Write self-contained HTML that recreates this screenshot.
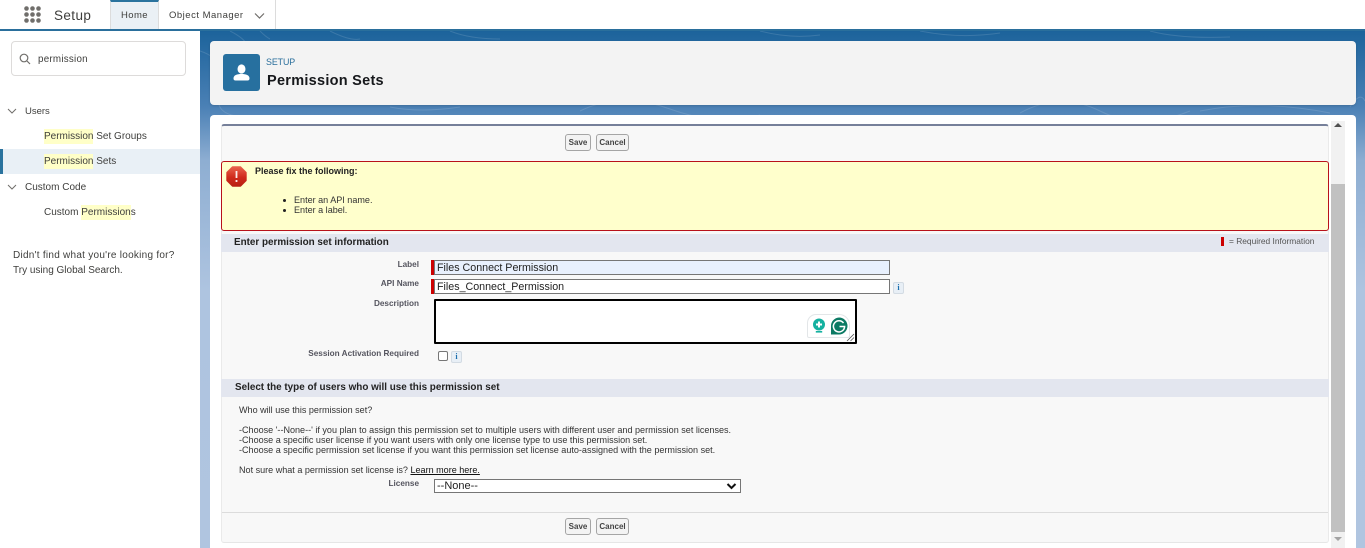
<!DOCTYPE html>
<html><head><meta charset="utf-8"><style>
html,body{margin:0;padding:0;width:1365px;height:548px;overflow:hidden;background:#fff;font-family:"Liberation Sans",sans-serif;color:#333}
.a{position:absolute;white-space:nowrap}
.nav{font-size:10px;color:#3e3e3c}
.hl{background:#ffffc8;padding:2px 0}
.btn{position:absolute;box-sizing:border-box;height:17px;border:1px solid #a5a5a5;border-radius:3px;background:#f3f3f3;font:bold 8px "Liberation Sans",sans-serif;color:#444;text-align:center;line-height:15px}
.lab{position:absolute;right:946px;font:bold 8.2px "Liberation Sans",sans-serif;color:#55555f;white-space:nowrap}
.inp{position:absolute;box-sizing:border-box;left:434px;width:456px;height:15px;border:1px solid #767676;font-size:10.7px;line-height:14px;padding-left:2px;color:#222;white-space:nowrap}
.req{position:absolute;left:431px;width:3px;height:15px;background:#c00}
.sec{position:absolute;left:221px;width:1108px;background:#e3e6ef;font:bold 9.9px "Liberation Sans",sans-serif;color:#222;height:18px;line-height:18px}
.t{position:absolute;font-size:9.05px;color:#333;white-space:nowrap;left:239px}
.i{position:absolute;box-sizing:border-box;width:11px;height:12px;border:1px solid #d3dbe3;border-radius:2px;background:#e8eff6;color:#1b6fae;font:bold 8px "Liberation Serif",serif;text-align:center;line-height:10px}
</style></head><body>

<!-- top bar -->
<div class="a" style="left:0;top:0;width:1365px;height:29px;background:#fff"></div>
<svg class="a" style="left:24px;top:6px" width="17" height="18" fill="#706e6b"><circle cx="2.5" cy="2.5" r="2.3"/><circle cx="8.5" cy="2.5" r="2.3"/><circle cx="14.5" cy="2.5" r="2.3"/><circle cx="2.5" cy="8.5" r="2.3"/><circle cx="8.5" cy="8.5" r="2.3"/><circle cx="14.5" cy="8.5" r="2.3"/><circle cx="2.5" cy="14.5" r="2.3"/><circle cx="8.5" cy="14.5" r="2.3"/><circle cx="14.5" cy="14.5" r="2.3"/></svg>
<div class="a" style="left:54px;top:8px;font-size:13.5px;letter-spacing:.4px;color:#3e3e3c">Setup</div>
<div class="a" style="left:110px;top:0;width:49px;height:29px;box-sizing:border-box;background:#eaf0f5;border-top:2px solid #2a739e;border-left:1px solid #dcdcdc;border-right:1px solid #dcdcdc"></div>
<div class="a" style="left:121px;top:10px;font-size:9.5px;letter-spacing:.4px;color:#3e3e3c">Home</div>
<div class="a" style="left:169px;top:10px;font-size:9.5px;letter-spacing:.5px;color:#3e3e3c">Object Manager</div>
<svg class="a" style="left:254px;top:12px" width="11" height="8" fill="none" stroke="#706e6b" stroke-width="1.2"><path d="M1 1.5L5.5 6L10 1.5"/></svg>
<div class="a" style="left:275px;top:0;width:1px;height:29px;background:#dcdcdc"></div>
<div class="a" style="left:0;top:29px;width:1365px;height:2px;background:#2a6f9c"></div>

<!-- sidebar -->
<div class="a" style="left:0;top:31px;width:200px;height:517px;background:#fff"></div>
<div class="a" style="left:11px;top:41px;width:175px;height:35px;box-sizing:border-box;border:1px solid #dddbda;border-radius:4px;background:#fff"></div>
<svg class="a" style="left:19px;top:53px" width="12" height="12" fill="none" stroke="#706e6b" stroke-width="1.2"><circle cx="5" cy="5" r="3.8"/><path d="M8 8L11 11"/></svg>
<div class="a nav" style="left:38px;top:54px;font-size:9.8px;letter-spacing:.25px">permission</div>
<svg class="a" style="left:7px;top:108px" width="10" height="7" fill="none" stroke="#706e6b"><path d="M1 1L5 5L9 1"/></svg>
<div class="a nav" style="left:25px;top:106px;font-size:9.5px">Users</div>
<div class="a nav" style="left:44px;top:131px"><span class="hl">Permission</span> Set Groups</div>
<div class="a" style="left:0;top:149px;width:200px;height:25px;background:#e9f0f6"></div>
<div class="a" style="left:0;top:149px;width:3px;height:25px;background:#2a739e"></div>
<div class="a nav" style="left:44px;top:156px"><span class="hl">Permission</span> Sets</div>
<svg class="a" style="left:7px;top:184px" width="10" height="7" fill="none" stroke="#706e6b"><path d="M1 1L5 5L9 1"/></svg>
<div class="a nav" style="left:25px;top:182px">Custom Code</div>
<div class="a nav" style="left:44px;top:207px">Custom <span class="hl">Permission</span>s</div>
<div class="a nav" style="left:13px;top:250px;letter-spacing:.26px">Didn't find what you're looking for?</div>
<div class="a nav" style="left:13px;top:265px">Try using Global Search.</div>

<!-- main background -->
<div class="a" style="left:200px;top:31px;width:1165px;height:517px;background:linear-gradient(#1c639b 0,#4a80b5 75px,#8eaed2 130px,#aec4e0 260px,#b0c5e0 517px)"></div>
<svg class="a" style="left:200px;top:31px" width="1165" height="85" fill="none" stroke="#fff" stroke-opacity=".13" stroke-width="1"><path d="M0 20Q30 30 20 60T60 85M30 0Q60 15 40 30M380 80Q420 60 470 78T560 84M130 0Q150 10 160 8M820 82Q860 60 900 80T990 80M1000 80Q1060 68 1130 82M1150 76Q1160 60 1165 70M60 0Q66 6 70 8M250 0Q270 8 300 8M560 0Q590 8 620 4M720 0Q760 8 800 2M950 0Q980 8 1030 6M190 76Q220 82 260 76"/></svg>

<!-- header card -->
<div class="a" style="left:210px;top:41px;width:1146px;height:64px;box-sizing:border-box;background:#f3f3f3;border-radius:4px;box-shadow:0 1px 2px rgba(0,0,0,.15)"></div>
<div class="a" style="left:223px;top:54px;width:37px;height:37px;background:#27709f;border-radius:3px"></div>
<svg class="a" style="left:233px;top:64px" width="17" height="17" fill="#fff"><ellipse cx="8.5" cy="5" rx="4" ry="4.6"/><path d="M0.5 14.5C0.5 11 4 10 8.5 10S16.5 11 16.5 14.5C16.5 15.8 15.8 16.5 14.5 16.5H2.5C1.2 16.5 .5 15.8 .5 14.5Z"/></svg>
<div class="a" style="left:266px;top:57px;font-size:8.9px;letter-spacing:-.1px;color:#2a6f9c">SETUP</div>
<div class="a" style="left:267px;top:73px;font-size:14.5px;font-weight:bold;letter-spacing:.27px;color:#16181b">Permission Sets</div>

<!-- content card -->
<div class="a" style="left:210px;top:115px;width:1146px;height:433px;background:#fff;border-radius:4px 4px 0 0"></div>
<div class="a" style="left:221px;top:124px;width:1108px;height:419px;box-sizing:border-box;background:#f8f8f8;border-top:2px solid #76809a;border-bottom:1px solid #e6e6e6;border-right:1px solid #eaeaea;border-left:1px solid #eaeaea;border-radius:3px"></div>

<!-- scrollbar -->
<div class="a" style="left:1331px;top:121px;width:14px;height:427px;background:#f1f1f1"></div>
<div class="a" style="left:1331px;top:184px;width:14px;height:348px;background:#c1c1c1"></div>
<div class="a" style="left:1334px;top:123px;width:0;height:0;border-left:4px solid transparent;border-right:4px solid transparent;border-bottom:4px solid #505050"></div>
<div class="a" style="left:1334px;top:537px;width:0;height:0;border-left:4px solid transparent;border-right:4px solid transparent;border-top:4px solid #a3a3a3"></div>

<div class="btn" style="left:565px;top:134px;width:26px">Save</div>
<div class="btn" style="left:596px;top:134px;width:33px">Cancel</div>

<!-- error -->
<div class="a" style="left:221px;top:161px;width:1108px;height:70px;box-sizing:border-box;background:#ffffcc;border:1px solid #b8121a;border-radius:3px"></div>
<svg class="a" style="left:226px;top:166px" width="21" height="21"><defs><linearGradient id="g" x1="0" y1="0" x2="0" y2="1"><stop offset="0" stop-color="#e8604a"/><stop offset=".55" stop-color="#cf2a1b"/><stop offset="1" stop-color="#b92013"/></linearGradient></defs><polygon points="6.5,1 14.5,1 20,6.5 20,14.5 14.5,20 6.5,20 1,14.5 1,6.5" fill="url(#g)" stroke="url(#g)" stroke-width="1.4" stroke-linejoin="round"/><rect x="9.6" y="5" width="1.8" height="7" fill="#fff" opacity=".9"/><rect x="9.6" y="14" width="1.8" height="2" fill="#fff" opacity=".9"/></svg>
<div class="a" style="left:255px;top:166px;font-size:9px;font-weight:bold;color:#222">Please fix the following:</div>
<div class="a" style="left:283px;top:199px;width:3px;height:3px;background:#222;border-radius:50%"></div>
<div class="a" style="left:283px;top:209px;width:3px;height:3px;background:#222;border-radius:50%"></div>
<div class="a" style="left:294px;top:195px;font-size:9.05px;color:#333">Enter an API name.</div>
<div class="a" style="left:294px;top:205px;font-size:9.05px;color:#333">Enter a label.</div>

<!-- section 1 -->
<div class="sec" style="top:234px"><span style="margin-left:13px">Enter permission set information</span></div>
<div class="a" style="left:1221px;top:237px;width:3px;height:9px;background:#c00"></div>
<div class="a" style="left:1229px;top:236px;font-size:8.4px;color:#555">= Required Information</div>

<div class="lab" style="top:260px">Label</div>
<div class="req" style="top:260px"></div>
<div class="inp" style="top:260px;background:#e8f0fd">Files Connect Permission</div>
<div class="lab" style="top:279px">API Name</div>
<div class="req" style="top:279px"></div>
<div class="inp" style="top:279px;background:#fff">Files_Connect_Permission</div>
<div class="i" style="left:893px;top:282px">i</div>
<div class="lab" style="top:299px">Description</div>
<div class="a" style="left:434px;top:299px;width:423px;height:45px;box-sizing:border-box;border:2px solid #000;border-radius:1px;background:#fff"></div>
<svg class="a" style="left:846px;top:333px" width="9" height="9" stroke="#555" fill="none" stroke-width=".8"><path d="M1 8L8 1M4.5 8L8 4.5"/></svg>
<div class="a" style="left:807px;top:314px;width:43px;height:24px;box-sizing:border-box;background:#fff;border:1px solid #e3e6e8;border-radius:9px 11px 2px 2px"></div>
<svg class="a" style="left:812px;top:318px" width="14" height="17"><circle cx="7" cy="6.5" r="6" fill="#15b1a0"/><rect x="3.8" y="13" width="6.4" height="1.6" fill="#15b1a0"/><path d="M7 3.5V9.5M4 6.5H10" stroke="#fff" stroke-width="2"/></svg>
<svg class="a" style="left:830px;top:317px" width="18" height="18"><path d="M9 .5A8.5 8.5 0 1 1 9 17.5H1V9A8.5 8.5 0 0 1 9 .5Z" fill="#0c7a64"/><path d="M13.5 6A5.6 5.6 0 1 0 14.6 9.5H9.5" fill="none" stroke="#fff" stroke-width="1.5"/></svg>
<div class="lab" style="top:349px">Session Activation Required</div>
<div class="a" style="left:438px;top:351px;width:10px;height:10px;box-sizing:border-box;border:1px solid #767676;border-radius:2px;background:#fff"></div>
<div class="i" style="left:451px;top:351px">i</div>

<!-- section 2 -->
<div class="sec" style="top:379px"><span style="margin-left:14px">Select the type of users who will use this permission set</span></div>
<div class="t" style="top:405px">Who will use this permission set?</div>
<div class="t" style="top:425px">-Choose '--None--' if you plan to assign this permission set to multiple users with different user and permission set licenses.</div>
<div class="t" style="top:435px">-Choose a specific user license if you want users with only one license type to use this permission set.</div>
<div class="t" style="top:445px">-Choose a specific permission set license if you want this permission set license auto-assigned with the permission set.</div>
<div class="t" style="top:465px">Not sure what a permission set license is? <span style="text-decoration:underline;color:#111">Learn more here.</span></div>
<div class="lab" style="top:479px">License</div>
<div class="a" style="left:434px;top:479px;width:307px;height:14px;box-sizing:border-box;border:1px solid #767676;background:#fff;font-size:11px;line-height:13px;padding-left:2px;color:#222">--None--</div>
<svg class="a" style="left:726px;top:483px" width="11" height="7" fill="none" stroke="#111" stroke-width="2"><path d="M1.5 1L5.5 5L9.5 1"/></svg>
<div class="a" style="left:222px;top:512px;width:1106px;height:1px;background:#dcdcdc"></div>
<div class="btn" style="left:565px;top:518px;width:26px">Save</div>
<div class="btn" style="left:596px;top:518px;width:33px">Cancel</div>
</body></html>
